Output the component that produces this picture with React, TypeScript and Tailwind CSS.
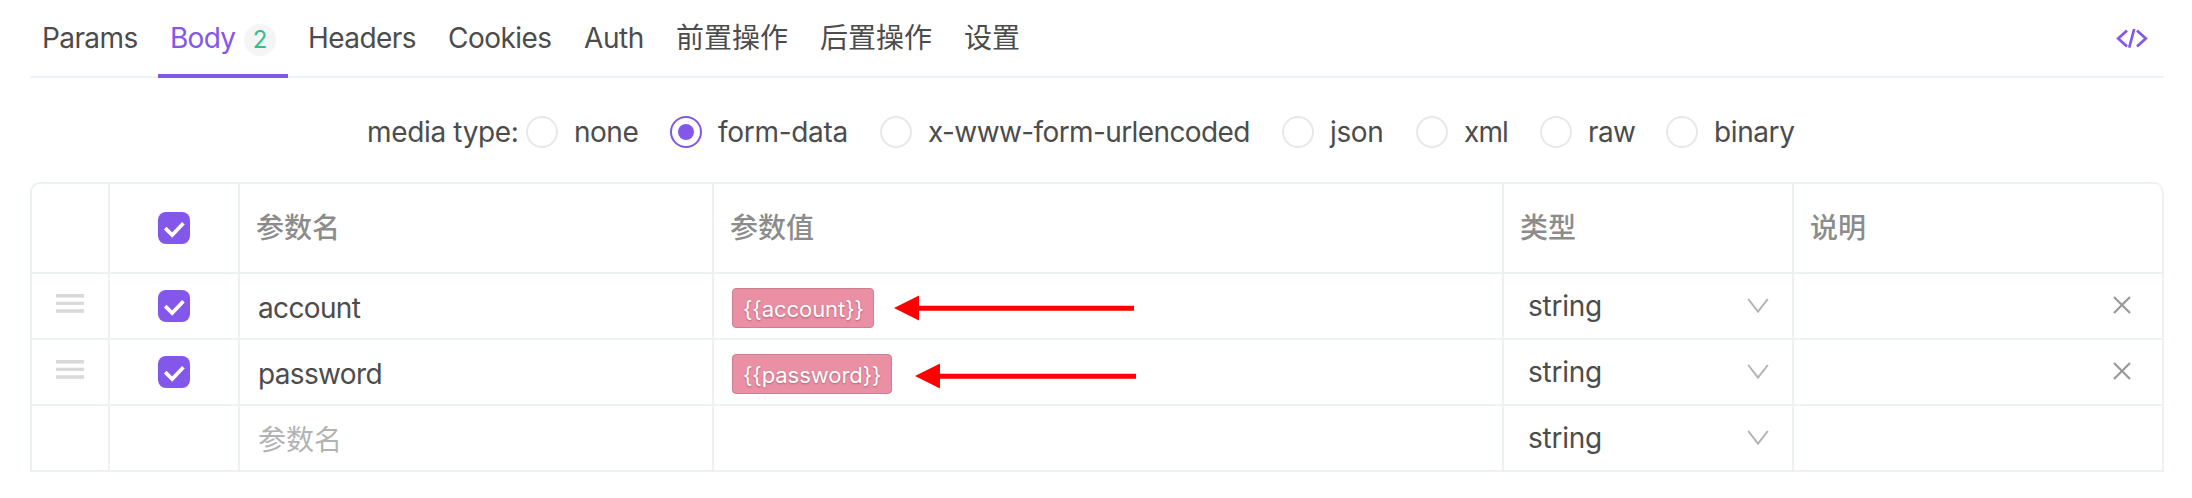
import type { ReactNode } from "react";

const PURPLE = "#8357ea";

const tabs = [
  { label: "Params", box: "w-[120px]", track: "tracking-[-0.6px]" },
  { label: "Body", box: "w-[130px]", track: "tracking-[-0.7px]", count: 2 },
  { label: "Headers", box: "w-[132px]", track: "tracking-[-0.55px]" },
  { label: "Cookies", box: "w-[128px]", track: "tracking-[-0.55px]" },
  { label: "Auth", box: "w-[84px]", track: "tracking-[-0.4px]" },
  { label: "前置操作", box: "w-[136px]", track: "" },
  { label: "后置操作", box: "w-[136px]", track: "" },
  { label: "设置", box: "w-[80px]", track: "" },
];

const mediaTypes = [
  { label: "none", box: "w-[144px]", track: "tracking-[-0.5px]" },
  { label: "form-data", box: "w-[210px]", track: "tracking-[-0.3px]", checked: true },
  { label: "x-www-form-urlencoded", box: "w-[402px]", track: "tracking-[-0.6px]" },
  { label: "json", box: "w-[134px]", track: "tracking-[-0.4px]" },
  { label: "xml", box: "w-[124px]", track: "tracking-[-0.9px]" },
  { label: "raw", box: "w-[126px]", track: "tracking-[-0.6px]" },
  { label: "binary", box: "w-[130px]", track: "tracking-[-0.4px]" },
];

const rows = [
  { name: "account", value: "{{account}}", tag: "w-[142px]" },
  { name: "password", value: "{{password}}", tag: "w-[160px]" },
];

function Checkbox() {
  return (
    <span className="flex h-8 w-8 items-center justify-center rounded-[8px] bg-[#8357ea]">
      <svg width="32" height="32" viewBox="0 0 32 32" fill="none">
        <path d="M7.2 16.2 L14.2 23 L25.4 11.3" stroke="#fff" strokeWidth="3.7" />
      </svg>
    </span>
  );
}

function Cell({ className = "", children }: { className?: string; children?: ReactNode }) {
  return (
    <div className={`flex items-center border-r-2 border-b-2 border-[#ecf2f2] ${className}`}>
      {children}
    </div>
  );
}

function DragHandle() {
  return (
    <svg className="-mt-[5px]" width="28" height="19" viewBox="0 0 28 19">
      <rect x="0" y="0" width="28" height="3.6" fill="#d9d9d9" />
      <rect x="0" y="7.7" width="28" height="3.2" fill="#d9d9d9" />
      <rect x="0" y="15.2" width="28" height="3.6" fill="#d9d9d9" />
    </svg>
  );
}

function TypeSelect() {
  return (
    <Cell className="justify-between pr-[23px] pl-[24px]">
      <span className="tracking-[-0.25px]">string</span>
      <svg width="22" height="16" viewBox="0 0 22 16" fill="none">
        <path d="M1.2 1 L11 13.6 L20.8 1" stroke="#b3b3b3" strokeWidth="2" />
      </svg>
    </Cell>
  );
}

function Arrow({ length, className }: { length: number; className: string }) {
  return (
    <svg className={className} width={length} height="26" viewBox={`0 0 ${length} 26`}>
      <path d={`M0 13 L25 0.5 V10.7 H${length} V15.8 H25 V25.5 Z`} fill="#fe0000" />
    </svg>
  );
}

export default function App() {
  return (
    <div className="h-[498px] w-[2192px] bg-white px-[30px] font-['Inter','Noto_Sans_CJK_SC',sans-serif] text-[28px] leading-[40px] whitespace-nowrap text-[#4c4c4c]">
      <nav className="flex h-[78px] w-[2134px] gap-2 border-b-2 border-[#edf3f7]">
        {tabs.map((t) => (
          <div
            key={t.label}
            className={`-mb-0.5 flex h-[78px] shrink-0 gap-2 border-b-4 pt-[18px] pl-3 ${t.box} ${
              t.count ? "border-[#8357ea] text-[#8357ea]" : "border-transparent"
            }`}
          >
            <span className={`${t.track} ${t.count ? "w-[66px]" : ""}`}>{t.label}</span>
            {t.count && (
              <span className="mt-[6px] flex h-8 w-8 items-center justify-center rounded-full bg-[#f5f5f5] text-2xl text-[#2fc08b]">
                {t.count}
              </span>
            )}
          </div>
        ))}
        <svg className="mt-[28px] mr-[16px] ml-auto" width="32" height="21" viewBox="0 0 32 21" fill="none">
          <path
            d="M11 2.5 L2.2 10.5 L11 18.5 M21 2.5 L29.8 10.5 L21 18.5 M18.2 1 L13.2 19.6"
            stroke={PURPLE}
            strokeWidth="2.7"
          />
        </svg>
      </nav>

      <div className="mt-[34px] flex h-10 items-center pl-[337px]">
        <span className="w-[159px] tracking-[-0.35px]">media type:</span>
        {mediaTypes.map((m) => (
          <label key={m.label} className={`flex shrink-0 items-center gap-4 ${m.box}`}>
            <span
              className={`flex h-8 w-8 shrink-0 items-center justify-center rounded-full border-2 ${
                m.checked ? "border-[#8357ea]" : "border-[#e8e8e8]"
              }`}
            >
              {m.checked && <span className="h-4 w-4 rounded-full bg-[#8357ea]" />}
            </span>
            <span className={m.track}>{m.label}</span>
          </label>
        ))}
      </div>

      <div className="mt-[30px] grid w-[2134px] grid-cols-[78px_130px_474px_790px_290px_370px] grid-rows-[90px_66px_66px_66px] overflow-hidden rounded-t-[10px] border-t-2 border-l-2 border-[#ecf2f2]">
        <Cell />
        <Cell className="justify-center"><Checkbox /></Cell>
        <Cell className="pl-4 font-medium text-[#8c8c8c]">参数名</Cell>
        <Cell className="pl-4 font-medium text-[#8c8c8c]">参数值</Cell>
        <Cell className="pl-4 font-medium text-[#8c8c8c]">类型</Cell>
        <Cell className="rounded-tr-[10px] pl-4 font-medium text-[#8c8c8c]">说明</Cell>

        {rows.map((r, i) => (
          <div key={r.name} className="contents">
            <Cell className="justify-center"><DragHandle /></Cell>
            <Cell className="justify-center"><Checkbox /></Cell>
            <Cell className="pt-[3px] pl-[18px] tracking-[-0.65px]">{r.name}</Cell>
            <Cell className="pl-[18px]">
              <span
                className={`mt-1 flex h-10 items-center rounded-[4px] border border-[#cd7f92] bg-[#eb8fa5] pt-px pl-[10px] text-[22px] tracking-[-0.05px] text-white [text-shadow:0_1px_2px_rgba(0,0,0,0.3)] ${r.tag}`}
              >
                {r.value}
              </span>
              <Arrow
                length={i === 0 ? 240 : 221}
                className={i === 0 ? "mt-1 ml-[20px]" : "mt-2 ml-[23px]"}
              />
            </Cell>
            <TypeSelect />
            <Cell className="justify-end pr-[31px]">
              <svg className="-mt-[2px]" width="18" height="18" viewBox="0 0 18 18" fill="none">
                <path d="M1 1 L17 17 M17 1 L1 17" stroke="#999999" strokeWidth="2.2" />
              </svg>
            </Cell>
          </div>
        ))}

        <Cell />
        <Cell />
        <Cell className="pt-[3px] pl-[18px] text-[#b3b3b3]">参数名</Cell>
        <Cell />
        <TypeSelect />
        <Cell />
      </div>
    </div>
  );
}
